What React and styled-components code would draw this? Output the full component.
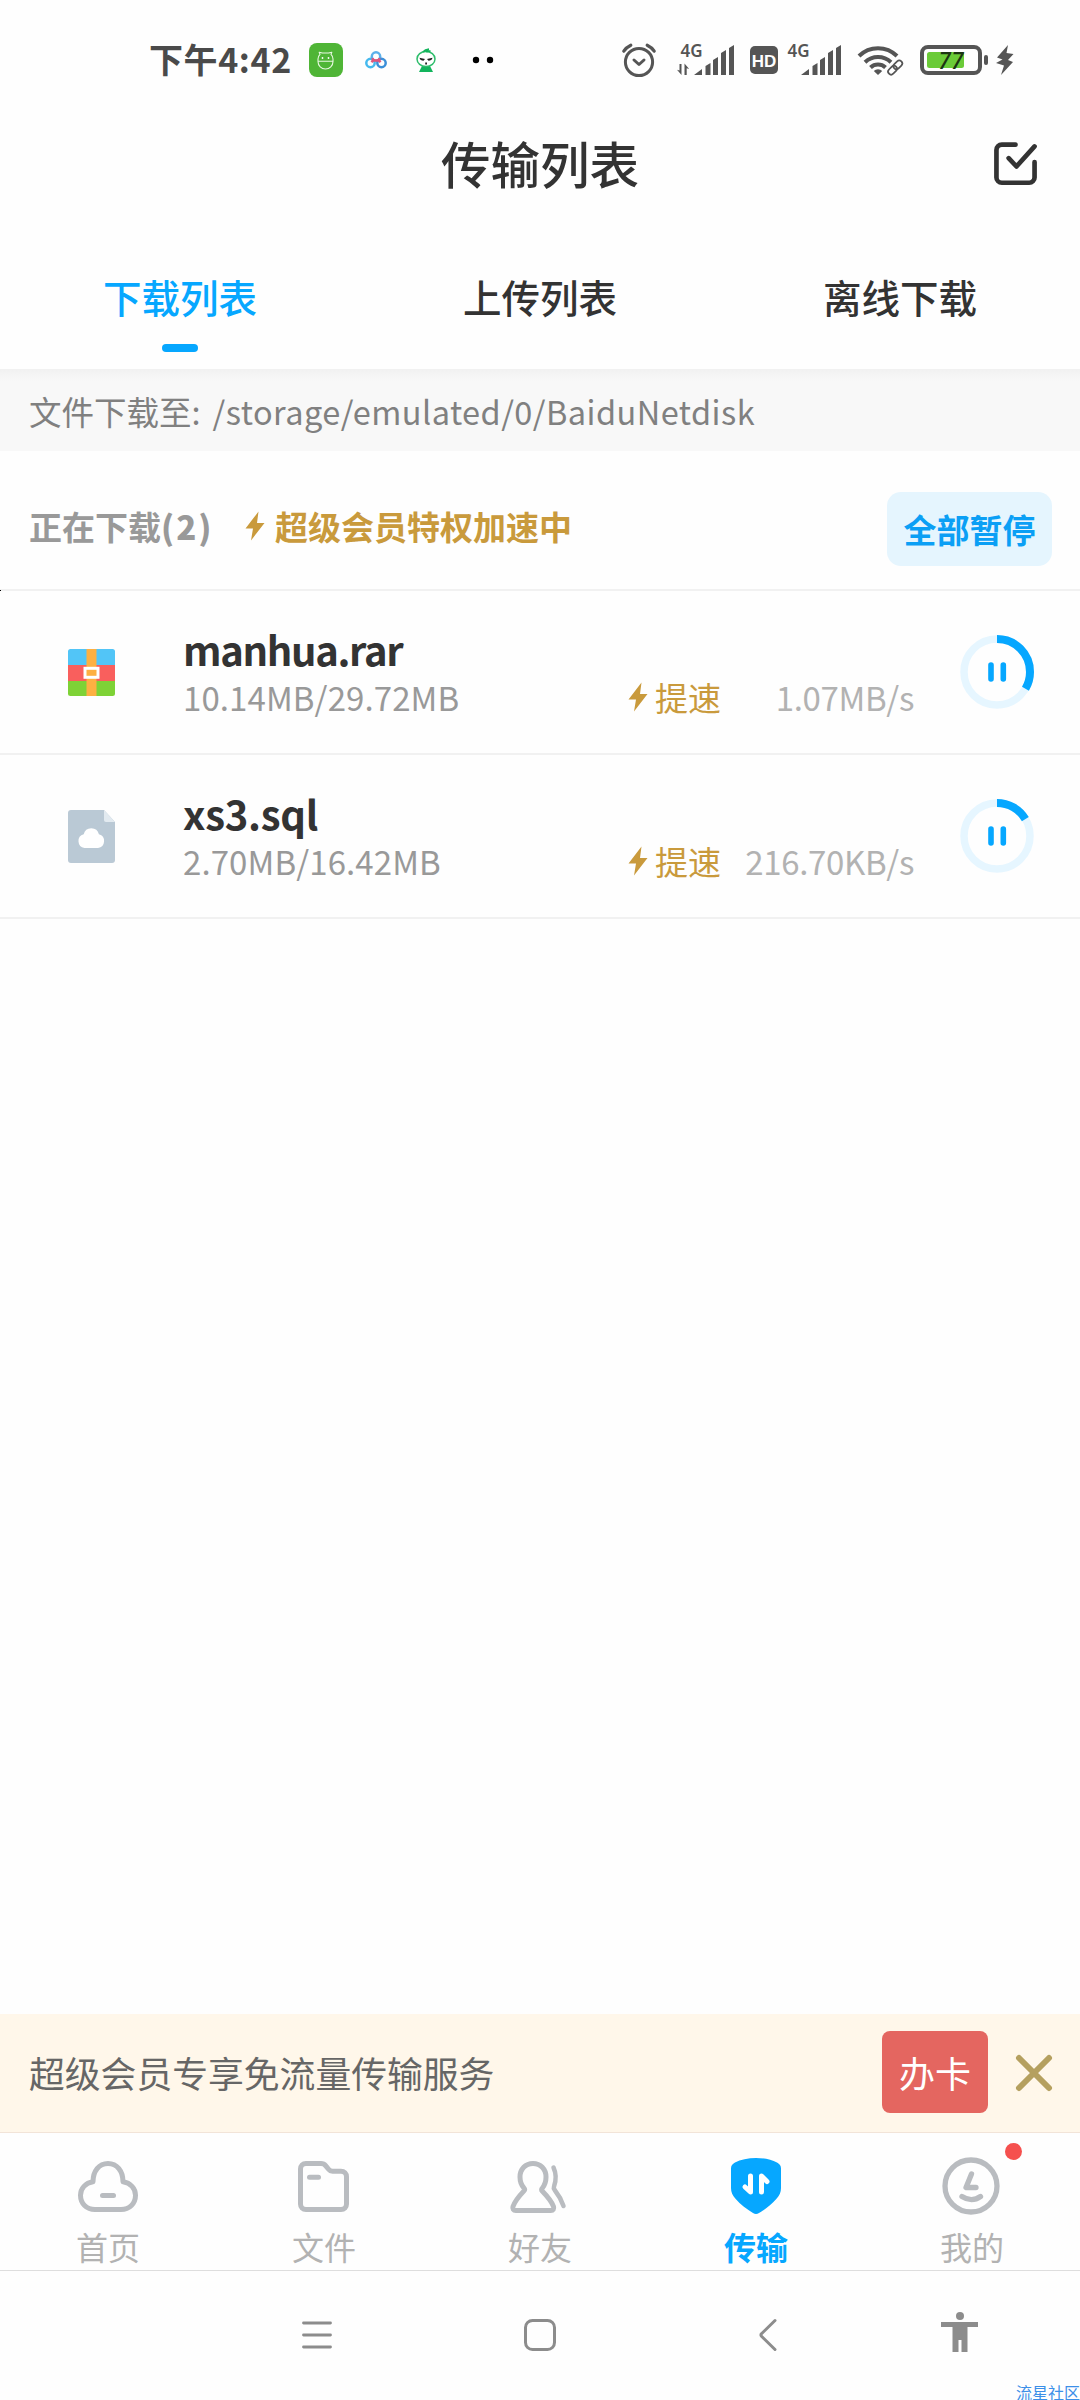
import React from "react";
import { styled, createGlobalStyle } from "styled-components";

const BLUE = "#06a7ff";
const GOLD = "#c99a3c";
const GREY = "#b9bcc0";
const STATUS = "#555";

const downloads = [
    { name: "manhua.rar", type: "rar", size: "10.14MB/29.72MB", speed: "1.07MB/s", progress: 0.334, tracking: -1.35 },
    { name: "xs3.sql", type: "file", size: "2.70MB/16.42MB", speed: "216.70KB/s", progress: 0.164, tracking: -0.3 },
];

const GlobalStyle = createGlobalStyle`
    * {
        box-sizing: border-box;
    }
    body {
        margin: 0;
        background: #fefefe;
        font-family: "Noto Sans CJK SC", "Noto Sans", sans-serif;
    }
    svg {
        display: block;
        flex: none;
        overflow: visible;
    }
`;

/* ---------- status bar icons ---------- */

const AppStoreIcon = () => (
    <svg width="34" height="34" viewBox="0 0 34 34">
        <rect width="34" height="34" rx="8" fill="#4fb536" />
        <g fill="none" stroke="#e9f8e2" strokeWidth="1.100" strokeLinecap="round" strokeLinejoin="round">
            <path d="M9 18.500v-2.500c0-2 .8-3.500 2-4.600L10.200 9.200l3.200.8h6.200l3.200-.8-.8 2.200c1.200 1.100 2 2.600 2 4.600v2.500a7.500 7.500 0 0 1-15 0zM9 18.300h15" />
        </g>
        <circle cx="13.500" cy="15" r=".9" fill="#fff" />
        <circle cx="19.500" cy="15" r=".9" fill="#fff" />
    </svg>
);

const NetdiskIcon = () => (
    <svg width="22" height="18" viewBox="0 0 22 18">
        <g fill="none" strokeWidth="2.500">
            <circle cx="11" cy="5.500" r="4.200" stroke="#5cb0ea" />
            <circle cx="5.500" cy="12" r="4.200" stroke="#45b9ee" />
            <circle cx="16.500" cy="12" r="4.200" stroke="#3c8fd8" />
            <path d="M7.200 7.200a4.200 4.200 0 0 0 7.600 0M8.400 9.200l-2 2M13.600 9.200l2 2" stroke="#e2557c" />
        </g>
    </svg>
);

const AlienIcon = () => (
    <svg width="20" height="24" viewBox="0 0 20 24">
        <path d="M6 18h8l3 6H3z" fill="#12b45c" />
        <ellipse cx="10" cy="11" rx="9" ry="7.500" fill="#fff" stroke="#2dbd6b" strokeWidth="1.500" />
        <path d="M7 4c1.500-1.800 3.500-2.600 6-2.800M10 3.800c1.500-1 3-1 4.500-.5" stroke="#12b45c" strokeWidth="1.800" fill="none" />
        <path d="M3.500 9.800l5.500 1.200-1.500 1.800C5.500 12.800 4 12 3.500 9.800zM16.500 9.800L11 11l1.500 1.800c2 0 3.500-.8 4-3z" fill="#222" />
        <rect x="9.200" y="14.500" width="1.800" height="2" fill="#222" />
    </svg>
);

const DotsIcon = () => (
    <svg width="22" height="8" viewBox="0 0 22 8">
        <circle cx="4" cy="4" r="3.200" />
        <circle cx="18" cy="4" r="3.200" />
    </svg>
);

const AlarmIcon = () => (
    <svg width="34" height="34" viewBox="0 0 34 34" fill="none" stroke={STATUS} strokeLinecap="round">
        <circle cx="17" cy="19" r="13.600" strokeWidth="3" />
        <path d="M12 17l5 4.500 5-4.500" strokeWidth="3" strokeLinejoin="round" />
        <path d="M1.800 8.200C3.500 5.500 5.800 3.600 8.800 2.200M32.200 8.200C30.500 5.500 28.200 3.600 25.200 2.200" strokeWidth="3.200" />
    </svg>
);

const SignalIcon = ({ data }) => (
    <svg width="57" height="32" viewBox="0 0 57 32" fill={STATUS}>
        <SignalText x="3.500" y="12.500">4G</SignalText>
        <path d="M17 31l8-6v6zM28.500 31v-9l5-3v12zM36 31V16l5-3v18zM44 31V9l5-3v25zM52 31V4l5-3v30z" />
        {data && <path d="M4.500 20v11L0 25.800l2.500.8V20zM7.500 31V19.500L12.200 25l-2.500-.8V31z" />}
    </svg>
);

const HdIcon = () => (
    <svg width="28" height="28" viewBox="0 0 28 28">
        <rect width="28" height="28" rx="5" fill={STATUS} />
        <HdText x="14" y="20.500" textAnchor="middle">HD</HdText>
    </svg>
);

const WifiIcon = () => (
    <svg width="47" height="31" viewBox="0 0 47 31" fill="none" stroke={STATUS}>
        <path d="M2 11a27 27 0 0 1 38 0M8 17.200a19 19 0 0 1 26 0M13.500 22.500a11 11 0 0 1 15 0" strokeWidth="4" />
        <path d="M21 30l-4.200-4a6 6 0 0 1 8.400 0z" fill={STATUS} stroke="none" />
        <g stroke="#fefefe" strokeWidth="5">
            <path d="M33 28l10-10" />
        </g>
        <g transform="rotate(-45 38.500 22.500)" strokeWidth="1.700">
            <rect x="29.500" y="19.300" width="10" height="6" rx="3" />
            <rect x="37" y="19.300" width="10" height="6" rx="3" />
        </g>
    </svg>
);

const BatteryIcon = () => (
    <svg width="68" height="30" viewBox="0 0 68 30">
        <rect x="2" y="2" width="58" height="26" rx="6" fill="none" stroke={STATUS} strokeWidth="4" />
        <rect x="7" y="7" width="37" height="16" rx="2.500" fill="#6bcb38" />
        <rect x="64" y="10" width="4" height="10" rx="2" fill={STATUS} />
        <BatteryText x="31" y="23.500" textAnchor="middle">77</BatteryText>
    </svg>
);

const ChargeIcon = () => (
    <svg width="18" height="30" viewBox="0 0 18 30" fill={STATUS}>
        <path d="M12 0L1 12.500l5.500 2L0 18l8 2.500L5 30l12-13-5-2 5.500-6-7-1z" />
    </svg>
);

/* ---------- page icons ---------- */

const SelectIcon = () => (
    <svg width="43" height="43" viewBox="0 0 44 44" fill="none" stroke="#333" strokeWidth="4.800" strokeLinecap="round" strokeLinejoin="round">
        <path d="M22 2.700H8a5.500 5.500 0 0 0-5.500 5.500v28A5.500 5.500 0 0 0 8 41.700h28a5.500 5.500 0 0 0 5.500-5.500V20.500" />
        <path d="M15 16.500l8 8.500L41.500 4.500" />
    </svg>
);

const Bolt = () => (
    <svg width="20" height="30" viewBox="0 0 20 30" fill={GOLD}>
        <path d="M13.500.5L.500 17.500h7.500L6 29.500l13.500-17.500H12z" />
    </svg>
);

const RarIcon = () => (
    <svg width="48" height="48" viewBox="0 0 48 48">
        <path d="M0 16V2.500A2.500 2.500 0 0 1 2.500 0h42A2.500 2.500 0 0 1 47 2.500V16z" fill="#52c5f7" />
        <path d="M0 16h47v16H0z" fill="#f95f5d" />
        <path d="M0 32h47v12.500a2.500 2.500 0 0 1-2.500 2.500h-42A2.500 2.500 0 0 1 0 44.500z" fill="#7ed236" />
        <path d="M18.500 0h10v47h-10z" fill="#fdb042" />
        <rect x="17" y="19.300" width="13" height="9" fill="#fdb042" stroke="#fff" strokeWidth="3" />
    </svg>
);

const FileIcon = () => (
    <svg width="48" height="54" viewBox="0 0 48 54">
        <path d="M3 0h33l11 12v38a3 3 0 0 1-3 3H3a3 3 0 0 1-3-3V3a3 3 0 0 1 3-3z" fill="#bac9d5" />
        <path d="M36 0l11 12H38a2 2 0 0 1-2-2z" fill="#e2eaf0" />
        <path d="M16.500 38a7 7 0 0 1-.8-13.700 7.800 7.800 0 0 1 15.200 0A7 7 0 0 1 30 38z" fill="#fff" />
    </svg>
);

const ProgressRing = ({ value }) => {
    const r = 33;
    const length = 2 * Math.PI * r;
    return (
        <svg width="74" height="74" viewBox="0 0 74 74" fill="none">
            <circle cx="37" cy="37" r={r} stroke="#e6f6ff" strokeWidth="7.500" />
            <circle
                cx="37"
                cy="37"
                r={r}
                stroke={BLUE}
                strokeWidth="8"
                strokeDasharray={`${length * value} ${length}`}
                transform="rotate(-90 37 37)"
            />
            <path d="M31 30v14M43.300 30v14" stroke={BLUE} strokeWidth="5.600" strokeLinecap="round" />
        </svg>
    );
};

const CloseIcon = () => (
    <svg width="36" height="36" viewBox="0 0 36 36" stroke="#b5a05f" strokeWidth="6" strokeLinecap="round">
        <path d="M3 3l30 30M33 3L3 33" />
    </svg>
);

const HomeIcon = () => (
    <svg width="60" height="58" viewBox="0 0 60 58" fill="none" stroke={GREY} strokeWidth="5" strokeLinecap="round" strokeLinejoin="round">
        <path d="M15 24.800C15 14 21 6.500 30 6.500s15 7.500 15 18.300c7.500 1.200 12.500 6.500 12.500 13.500 0 8.200-6 14.200-14.500 14.200H17C8.500 52.500 2.500 46.500 2.500 38.300c0-7 5-12.300 12.500-13.500z" />
        <path d="M24.500 38.500h11" />
    </svg>
);

const FolderIcon = () => (
    <svg width="52" height="58" viewBox="0 0 52 58" fill="none" stroke={GREY} strokeWidth="5" strokeLinecap="round" strokeLinejoin="round">
        <path d="M8 6.500h15c2.200 0 3.500.7 4.800 2.300l3 3.700c1 1.300 2 1.800 3.700 1.800H43c3.300 0 5.500 2.200 5.500 5.500V47c0 3.300-2.200 5.500-5.500 5.500H8c-3.300 0-5.500-2.200-5.500-5.500V12c0-3.300 2.200-5.500 5.500-5.500z" />
        <path d="M11.500 20.300h9" />
    </svg>
);

const FriendsIcon = () => (
    <svg width="60" height="58" viewBox="0 0 60 58" fill="none" stroke={GREY} strokeWidth="5" strokeLinecap="round" strokeLinejoin="round">
        <path d="M23 6.500c-7.500 0-13 5.700-13 13.500 0 4.500 1.400 8.200 4 11.200.7.800.7 1.900 0 2.700C8.700 39.500 5 44 3 49.500c-.7 2.300.4 4 2.800 4h35c2.400 0 3.400-1.700 2.700-4C41.500 44 37.500 39.500 32.200 34c-.8-.8-.8-1.900 0-2.700C34.700 28.200 36 24.500 36 20c0-7.800-5.500-13.500-13-13.500z" />
        <path d="M43.500 10.500c2.800 6 2.800 12.500.5 19-.5 1.300-.3 2.300.7 3.500C49 38.500 51.500 43 53.500 49" strokeWidth="4.500" />
    </svg>
);

const TransferIcon = () => (
    <svg width="50" height="58" viewBox="0 0 50 58">
        <path d="M25 1c8 0 15.500 1.500 21 4.500 2.600 1.400 4 3.300 4 6V31c0 4-1.500 7.500-4.500 10.800C40.500 47.500 34 52.500 28 56c-2 1.200-4 1.200-6 0-6-3.500-12.500-8.500-17.500-14.200C1.500 38.500 0 35 0 31V11.500c0-2.700 1.400-4.600 4-6C9.500 2.500 17 1 25 1z" fill={BLUE} />
        <g stroke="#fff" strokeWidth="5" strokeLinecap="round" strokeLinejoin="round">
            <path d="M19.500 19v16L14 30" fill="none" />
            <path d="M30.500 35V19l5.500 5.500" fill="none" />
        </g>
    </svg>
);

const MineIcon = () => (
    <svg width="60" height="58" viewBox="0 0 60 58" fill="none" stroke={GREY} strokeWidth="5.300" strokeLinecap="round" strokeLinejoin="round">
        <circle cx="29" cy="29" r="26" />
        <path d="M29.500 17l-5.500 13.500h10" />
        <path d="M20 39.500c6 4 13 4 18.500 0" />
    </svg>
);

const MenuKey = () => (
    <svg width="30" height="32" viewBox="0 0 30 32" stroke="#8c8c8c" strokeWidth="2.800" strokeLinecap="round">
        <path d="M1.500 4h27M1.500 16h27M1.500 28h27" />
    </svg>
);

const HomeKey = () => (
    <svg width="32" height="32" viewBox="0 0 32 32" fill="none" stroke="#8c8c8c" strokeWidth="3">
        <rect x="1.500" y="1.500" width="29" height="29" rx="7" />
    </svg>
);

const BackKey = () => (
    <svg width="18" height="32" viewBox="0 0 18 32" fill="none" stroke="#8c8c8c" strokeWidth="3" strokeLinecap="round" strokeLinejoin="round">
        <path d="M16 1.500L2.500 14.800a1.500 1.500 0 0 0 0 2.400L16 30.500" />
    </svg>
);

const PersonKey = () => (
    <svg width="37" height="40" viewBox="0 0 37 40" fill="#8c8c8c">
        <circle cx="19" cy="4" r="4" />
        <path d="M0 10h37v5H26.500v25h-6V28h-3v12h-6V15H0z" />
    </svg>
);

const tabs = ["下载列表", "上传列表", "离线下载"];

const navItems = [
    { label: "首页", Icon: HomeIcon },
    { label: "文件", Icon: FolderIcon },
    { label: "好友", Icon: FriendsIcon },
    { label: "传输", Icon: TransferIcon, active: true },
    { label: "我的", Icon: MineIcon, badge: true },
];

const StatusBar = () => (
    <StatusWrapper>
        <Clock>下午4:42</Clock>
        <Slot $w={34} $gap={17}><AppStoreIcon /></Slot>
        <Slot $w={22} $gap={22}><NetdiskIcon /></Slot>
        <Slot $w={20} $gap={29}><AlienIcon /></Slot>
        <Slot $w={22} $gap={36}><DotsIcon /></Slot>
        <StatusRight>
            <AlarmIcon />
            <Slot $w={57} $gap={21}><SignalIcon data /></Slot>
            <Slot $w={28} $gap={16}><HdIcon /></Slot>
            <Slot $w={57} $gap={6}><SignalIcon /></Slot>
            <Slot $w={47} $gap={16}><WifiIcon /></Slot>
            <Slot $w={68} $gap={16}><BatteryIcon /></Slot>
            <Slot $w={18} $gap={8}><ChargeIcon /></Slot>
        </StatusRight>
    </StatusWrapper>
);

const DownloadRow = ({ item }) => (
    <Row>
        <FileType>{item.type === "rar" ? <RarIcon /> : <FileIcon />}</FileType>
        <Info>
            <FileName $tracking={item.tracking}>{item.name}</FileName>
            <Meta>
                <Size>{item.size}</Size>
                <Boost>
                    <Bolt />
                    提速
                </Boost>
                <Speed>{item.speed}</Speed>
            </Meta>
        </Info>
        <ProgressRing value={item.progress} />
    </Row>
);

const App = () => {
    return (
        <Page>
            <GlobalStyle />
            <StatusBar />
            <Header>
                <Title>传输列表</Title>
                <SelectIcon />
            </Header>
            <Tabs>
                {tabs.map((tab, index) => (
                    <Tab key={tab} $active={index === 0}>
                        {tab}
                    </Tab>
                ))}
            </Tabs>
            <PathBar>
                <span>文件下载至:</span>
                <Path>/storage/emulated/0/BaiduNetdisk</Path>
            </PathBar>
            <Section>
                <Count>
                    正在下载<b>(2)</b>
                </Count>
                <Bolt />
                <Vip>超级会员特权加速中</Vip>
                <PauseAll>全部暂停</PauseAll>
                <Speck />
            </Section>
            <List>
                {downloads.map((item) => (
                    <DownloadRow key={item.name} item={item} />
                ))}
            </List>
            <Banner>
                <BannerText>超级会员专享免流量传输服务</BannerText>
                <BannerButton>办卡</BannerButton>
                <CloseIcon />
            </Banner>
            <BottomNav>
                {navItems.map(({ label, Icon, active, badge }) => (
                    <NavItem key={label} $active={active}>
                        <Icon />
                        <span>{label}</span>
                        {badge && <Badge />}
                    </NavItem>
                ))}
            </BottomNav>
            <SystemKeys>
                <MenuKey />
                <HomeKey />
                <BackKey />
                <PersonKey />
                <Watermark>流星社区</Watermark>
            </SystemKeys>
        </Page>
    );
};

const Page = styled.div`
    width: 1080px;
    height: 2400px;
    display: flex;
    flex-direction: column;
    overflow: hidden;
    background: #fefefe;
`;

const StatusWrapper = styled.div`
    height: 120px;
    flex: none;
    display: flex;
    align-items: center;
    padding: 0 66px 0 149px;
`;

const Clock = styled.div`
    width: 143px;
    padding-bottom: 2px;
    font-size: 34px;
    font-weight: 700;
    line-height: 48px;
    letter-spacing: 0.6px;
    color: #4a4a4a;
    white-space: nowrap;
`;

const Slot = styled.div`
    width: ${({ $w }) => $w}px;
    margin-left: ${({ $gap }) => $gap}px;
`;

const StatusRight = styled.div`
    margin-left: auto;
    display: flex;
    align-items: center;
`;

const SignalText = styled.text`
    font-family: "Noto Sans", sans-serif;
    font-size: 17px;
    font-weight: 600;
`;

const HdText = styled.text`
    font-family: "Liberation Sans", sans-serif;
    font-size: 17px;
    font-weight: 700;
    fill: #fff;
`;

const BatteryText = styled.text`
    font-family: "Noto Sans", sans-serif;
    font-size: 23px;
    font-weight: 500;
    font-style: italic;
    fill: #1c3512;
`;

const Header = styled.header`
    height: 86px;
    flex: none;
    display: flex;
    align-items: center;
    padding: 0 43px 0 86px;
`;

const Title = styled.h1`
    flex: 1;
    margin: 0;
    text-align: center;
    font-size: 49.500px;
    line-height: 72px;
    font-weight: 500;
    color: #333;
`;

const Tabs = styled.nav`
    height: 163px;
    flex: none;
    display: grid;
    grid-template-columns: repeat(3, 1fr);
`;

const Tab = styled.div`
    display: flex;
    flex-direction: column;
    align-items: center;
    padding-top: 62px;
    font-size: 38.500px;
    line-height: 56px;
    font-weight: 500;
    color: ${({ $active }) => ($active ? BLUE : "#333")};
    &::after {
        content: "";
        width: 36px;
        height: 8px;
        margin-top: 20px;
        border-radius: 4px;
        background: ${({ $active }) => ($active ? BLUE : "transparent")};
    }
`;

const PathBar = styled.div`
    height: 82px;
    flex: none;
    display: flex;
    align-items: center;
    padding: 1px 30px 0 29px;
    background: linear-gradient(#f1f1f1, #f8f8f8 12px);
    font-size: 32.500px;
    line-height: 48px;
    color: #808080;
`;

const Path = styled.span`
    margin-left: 12px;
    letter-spacing: 0.45px;
`;

const Section = styled.div`
    position: relative;
    height: 140px;
    flex: none;
    display: flex;
    align-items: center;
    padding: 12px 28px 0 29px;
    border-bottom: 2px solid #f1f1f1;
    font-size: 33px;
    line-height: 48px;
    font-weight: 700;
`;

const Count = styled.div`
    width: 216px;
    color: #999;
    b {
        letter-spacing: 2px;
    }
`;

const Vip = styled.div`
    margin-left: 10px;
    color: ${GOLD};
`;

const PauseAll = styled.button`
    width: 165px;
    height: 74px;
    margin-left: auto;
    margin-top: 6px;
    padding: 0;
    border: 0;
    border-radius: 14px;
    background: #e5f5fe;
    font: inherit;
    color: #0b9ff5;
`;

const Speck = styled.i`
    position: absolute;
    left: 0;
    bottom: -2px;
    width: 1px;
    height: 1px;
    background: #000;
`;

const List = styled.div`
    flex: 1;
`;

const Row = styled.div`
    height: 164px;
    display: flex;
    align-items: center;
    padding: 0 46px 0 68px;
    border-bottom: 2px solid #f1f1f1;
`;

const FileType = styled.div`
    width: 48px;
    margin-top: 2px;
    margin-right: 67px;
`;

const Info = styled.div`
    width: 777px;
    flex: none;
    display: flex;
    flex-direction: column;
`;

const FileName = styled.div`
    font-size: 40px;
    line-height: 50px;
    font-weight: 700;
    letter-spacing: ${({ $tracking }) => $tracking}px;
    color: #333;
`;

const Meta = styled.div`
    display: flex;
    align-items: center;
    font-size: 33px;
    line-height: 47px;
`;

const Size = styled.div`
    width: 445px;
    letter-spacing: 0.1px;
    color: #999;
`;

const Boost = styled.div`
    display: flex;
    align-items: center;
    gap: 7px;
    color: ${GOLD};
`;

const Speed = styled.div`
    flex: 1;
    padding-right: 46px;
    text-align: right;
    letter-spacing: -0.35px;
    color: #b2b2b2;
`;

const Banner = styled.div`
    height: 119px;
    flex: none;
    display: flex;
    align-items: center;
    padding: 0 28px 0 29px;
    background: #fff7ea;
    border-bottom: 1px solid #f2e4d8;
`;

const BannerText = styled.div`
    padding-bottom: 2px;
    font-size: 35.800px;
    line-height: 52px;
    color: #666;
`;

const BannerButton = styled.button`
    width: 106px;
    height: 82px;
    margin: 0 28px 2px auto;
    padding: 0;
    border: 0;
    border-radius: 8px;
    background: #e46660;
    font-family: inherit;
    font-size: 36px;
    color: #fff;
`;

const BottomNav = styled.nav`
    height: 138px;
    flex: none;
    display: grid;
    grid-template-columns: repeat(5, 1fr);
    border-bottom: 1px solid #dedede;
`;

const NavItem = styled.div`
    position: relative;
    display: flex;
    flex-direction: column;
    align-items: center;
    padding-top: 24px;
    font-size: 32px;
    line-height: 46px;
    font-weight: ${({ $active }) => ($active ? 700 : 400)};
    color: ${({ $active }) => ($active ? BLUE : "#b2b2b2")};
    span {
        margin-top: 8px;
    }
`;

const Badge = styled.i`
    position: absolute;
    left: 141px;
    top: 10px;
    width: 17px;
    height: 17px;
    border-radius: 50%;
    background: #f5504e;
`;

const SystemKeys = styled.div`
    position: relative;
    height: 129px;
    flex: none;
    display: grid;
    grid-template-columns: 222px 235px 182px auto;
    align-items: start;
    padding: 48px 0 0 302px;
    svg:nth-of-type(4) {
        margin-top: -7px;
    }
`;

const Watermark = styled.div`
    position: absolute;
    right: 0;
    bottom: 0;
    font-size: 16px;
    line-height: 16px;
    color: #3c8fe8;
    white-space: nowrap;
`;

export default App;
